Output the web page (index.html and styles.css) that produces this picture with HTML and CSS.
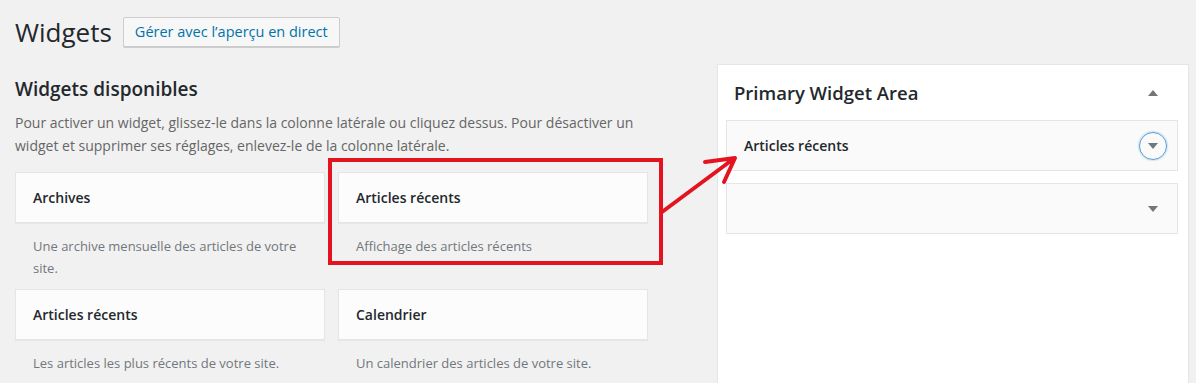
FILE: index.html
```html
<!DOCTYPE html>
<html lang="fr">
  <head>
    <meta charset="UTF-8" />
    <meta name="viewport" content="width=device-width, initial-scale=1.0" />
    <title>Widgets</title>
    <link rel="stylesheet" href="styles.css">
  </head>
  <body>
    <div class="wrap">
      <div class="title-row">
        <h1>Widgets</h1>
        <a class="btn" href="#">Gérer avec l’aperçu en direct</a>
      </div>

      <div class="columns">
        <div class="left">
          <h2 class="section-title">Widgets disponibles</h2>
          <p class="intro">Pour activer un widget, glissez-le dans la colonne latérale ou cliquez dessus. Pour désactiver un widget et supprimer ses réglages, enlevez-le de la colonne latérale.</p>

          <div class="widget-grid">
            <div class="widget">
              <div class="widget-top"><h3>Archives</h3></div>
              <div class="widget-desc">Une archive mensuelle des articles de votre site.</div>
            </div>
            <div class="widget">
              <div class="widget-top"><h3>Articles récents</h3></div>
              <div class="widget-desc">Affichage des articles récents</div>
            </div>
            <div class="widget">
              <div class="widget-top"><h3>Articles récents</h3></div>
              <div class="widget-desc">Les articles les plus récents de votre site.</div>
            </div>
            <div class="widget">
              <div class="widget-top"><h3>Calendrier</h3></div>
              <div class="widget-desc">Un calendrier des articles de votre site.</div>
            </div>
          </div>
        </div>

        <div class="right">
          <div class="sidebar">
            <div class="sidebar-head">
              <h2>Primary Widget Area</h2>
              <span class="arrow up"></span>
            </div>
            <div class="area-widget">
              <h3>Articles récents</h3>
              <span class="toggle-circle"><span class="arrow down"></span></span>
            </div>
            <div class="area-widget">
              <h3></h3>
              <span class="toggle-plain"><span class="arrow down"></span></span>
            </div>
          </div>
        </div>
      </div>

      <!-- annotation -->
      <svg class="annotation" width="1196" height="383" viewBox="0 0 1196 383">
        <rect x="330" y="160" width="331" height="103" fill="none" stroke="#e3141f" stroke-width="4" />
        <path d="M662 212 L732 160 M705 162 L735 158 L724 182" fill="none" stroke="#e3141f" stroke-width="4" stroke-linecap="round" stroke-linejoin="round" />
      </svg>
    </div>
  </body>
</html>
```

FILE: styles.css
```css
html, body {
  margin: 0;
  padding: 0;
  background: #f1f1f1;
}

body {
  font-family: "Open Sans", "Noto Sans", sans-serif;
  color: #23282d;
  font-size: 14px;
}

.wrap {
  position: relative;
  height: 383px;
  overflow: hidden;
  padding-left: 15px;
  padding-right: 7px;
}

.title-row {
  display: flex;
  align-items: center;
  gap: 11px;
  padding-top: 17px;
}

h1 {
  margin: 0;
  font-size: 26px;
  font-weight: 400;
  line-height: 30px;
}

.btn {
  display: block;
  height: 28px;
  line-height: 28px;
  padding: 0 11px;
  border: 1px solid #cccccc;
  border-radius: 2px;
  background: #f7f7f7;
  box-shadow: 0 1px 0 #cccccc;
  color: #0073aa;
  font-size: 14.5px;
  text-decoration: none;
}

.columns {
  display: flex;
  gap: 69px;
  margin-top: 17px;
}

.left {
  width: 633px;
  padding-top: 14px;
}

.section-title {
  margin: 0;
  font-size: 19px;
  font-weight: 600;
  line-height: 22px;
}

.intro {
  margin: 11px 0 0;
  color: #666666;
  font-size: 14px;
  line-height: 23px;
}

.widget-grid {
  display: grid;
  grid-template-columns: 310px 310px;
  column-gap: 13px;
  row-gap: 10px;
  margin-top: 15px;
}

.widget-top {
  height: 49px;
  display: flex;
  align-items: center;
  padding-left: 17px;
  background: #fcfcfc;
  border: 1px solid #e5e5e5;
  box-shadow: 0 1px 1px rgba(0, 0, 0, 0.04);
}

.widget-top h3,
.area-widget h3 {
  margin: 0;
  font-size: 14px;
  font-weight: 600;
}

.widget-desc {
  padding: 12px 18px 0;
  color: #72777c;
  font-size: 13px;
  line-height: 22px;
}

.right {
  flex: 1;
}

.sidebar {
  background: #ffffff;
  border: 1px solid #e5e5e5;
  height: 400px;
  padding: 0 10px 0 8px;
}

.sidebar-head {
  display: flex;
  align-items: center;
  justify-content: space-between;
  height: 55px;
  padding: 0 20px 0 8px;
}

.sidebar-head h2 {
  margin: 0;
  font-size: 18.5px;
  font-weight: 600;
}

.area-widget {
  display: flex;
  align-items: center;
  justify-content: space-between;
  height: 49px;
  padding: 0 10px 0 17px;
  margin-bottom: 12px;
  background: #fafafa;
  border: 1px solid #e5e5e5;
}

.arrow {
  display: block;
  width: 0;
  height: 0;
  border-left: 5px solid transparent;
  border-right: 5px solid transparent;
}

.arrow.up {
  border-bottom: 6px solid #72777c;
}

.arrow.down {
  border-top: 6px solid #72777c;
}

.toggle-circle,
.toggle-plain {
  display: flex;
  align-items: center;
  justify-content: center;
  width: 26px;
  height: 26px;
  border-radius: 50%;
}

.toggle-circle {
  border: 1px solid #5b9dd9;
  box-shadow: 0 0 2px rgba(30, 140, 190, 0.6);
}

.toggle-plain {
  border: 1px solid transparent;
}

.annotation {
  position: absolute;
  left: 0;
  top: 0;
  pointer-events: none;
}
```
